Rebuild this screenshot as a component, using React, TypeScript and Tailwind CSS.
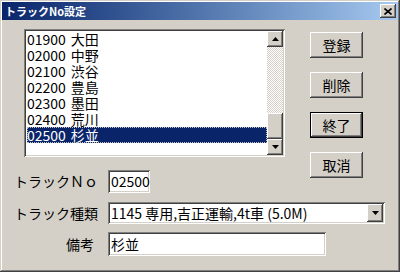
import React from 'react';

const items = [
  ['01900', '大田'],
  ['02000', '中野'],
  ['02100', '渋谷'],
  ['02200', '豊島'],
  ['02300', '墨田'],
  ['02400', '荒川'],
  ['02500', '杉並'],
];

const font = "font-['Noto_Sans_CJK_JP','Noto_Sans',sans-serif]";
const raised =
  'bg-[#d4d0c8] shadow-[inset_-1px_-1px_#404040,inset_1px_1px_#fff,inset_-2px_-2px_#808080,inset_2px_2px_#d4d0c8]';
const sunken =
  'shadow-[inset_1px_1px_#808080,inset_-1px_-1px_#fff,inset_2px_2px_#404040,inset_-2px_-2px_#d4d0c8]';

function Arrow({ up }: { up?: boolean }) {
  return (
    <div className={`w-[16px] h-[16px] flex items-center justify-center ${raised}`}>
      <svg width="7" height="4" viewBox="0 0 7 4">
        <path d={up ? 'M0 4 L3.5 0 L7 4 Z' : 'M0 0 L7 0 L3.5 4 Z'} fill="#000" />
      </svg>
    </div>
  );
}

function Btn({ label, primary }: { label: string; primary?: boolean }) {
  return (
    <div className={`w-[53px] h-[26px] ${primary ? 'border border-black' : ''}`}>
      <div className={`w-full h-full flex items-center justify-center text-[14px] text-black ${raised}`}>
        {label}
      </div>
    </div>
  );
}

export default function App() {
  return (
    <div
      className={`w-[400px] h-[272px] bg-[#d4d0c8] p-[2px] flex flex-col ${font} shadow-[inset_-1px_-1px_#404040,inset_1px_1px_#d4d0c8,inset_-2px_-2px_#808080,inset_2px_2px_#fff]`}
    >
      {/* Title bar */}
      <div className="h-[18px] shrink-0 flex items-center justify-between pl-[3px] pr-[2px] bg-gradient-to-r from-[#0a246a] to-[#a6caf0]">
        <span className="text-white text-[11px] font-bold leading-none">トラックNo設定</span>
        <div className={`w-[16px] h-[14px] flex items-center justify-center ${raised}`}>
          <svg width="8" height="7" viewBox="0 0 8 7">
            <path d="M0.5 0.5 L7.5 6.5 M7.5 0.5 L0.5 6.5" stroke="#000" strokeWidth="1.6" />
          </svg>
        </div>
      </div>

      <div className="flex pl-[12px] pt-[9px]">
        <div className="w-[296px]">
          {/* List box */}
          <div className={`ml-[10px] w-[261px] h-[128px] bg-white p-[2px] flex ${sunken}`}>
            <div className="flex-1 pl-[1px] text-[14px] leading-[16px] text-black">
              {items.map(([no, name], i) => {
                const sel = i === items.length - 1;
                return (
                  <div
                    key={no}
                    className={`h-[16px] flex whitespace-nowrap ${sel ? 'bg-[#0a246a] text-white outline-1 outline-dotted outline-[#c0c0c0] -outline-offset-1' : ''}`}
                  >
                    <span>{no}</span>
                    <span className="ml-[5px]">{name}</span>
                  </div>
                );
              })}
            </div>
            <div className="w-[16px] flex flex-col">
              <Arrow up />
              <div className="flex-1 flex flex-col justify-end bg-[repeating-conic-gradient(#fff_0_25%,#d4d0c8_0_50%)] bg-[length:2px_2px]">
                <div className={`h-[26px] ${raised}`} />
              </div>
              <Arrow />
            </div>
          </div>

          {/* Track No */}
          <div className="flex items-center mt-[13px] text-[14px] text-black">
            <span className="w-[84px] text-right">トラックＮｏ</span>
            <div className={`ml-[10px] w-[42px] h-[23px] bg-white pl-[3px] flex items-center ${sunken}`}>
              02500
            </div>
          </div>
        </div>

        {/* Buttons */}
        <div className="mt-[3px] flex flex-col gap-[14px]">
          <Btn label="登録" />
          <Btn label="削除" />
          <Btn label="終了" primary />
          <Btn label="取消" />
        </div>
      </div>

      {/* Track type */}
      <div className="flex items-center pl-[12px] mt-[9px] text-[14px] text-black">
        <span className="w-[84px] text-right">トラック種類</span>
        <div className={`ml-[10px] w-[277px] h-[22px] bg-white p-[2px] flex items-center ${sunken}`}>
          <span className="flex-1 pl-[1px] whitespace-nowrap">1145 専用,吉正運輸,4t車 (5.0M)</span>
          <div className={`w-[16px] h-[18px] flex items-center justify-center ${raised}`}>
            <svg width="7" height="4" viewBox="0 0 7 4">
              <path d="M0 0 L7 0 L3.5 4 Z" fill="#000" />
            </svg>
          </div>
        </div>
      </div>

      {/* Note */}
      <div className="flex items-center pl-[12px] mt-[8px] text-[14px] text-black">
        <span className="w-[80px] text-right mr-[4px]">備考</span>
        <div className={`ml-[10px] w-[218px] h-[24px] bg-white pl-[3px] flex items-center ${sunken}`}>
          杉並
        </div>
      </div>
    </div>
  );
}
